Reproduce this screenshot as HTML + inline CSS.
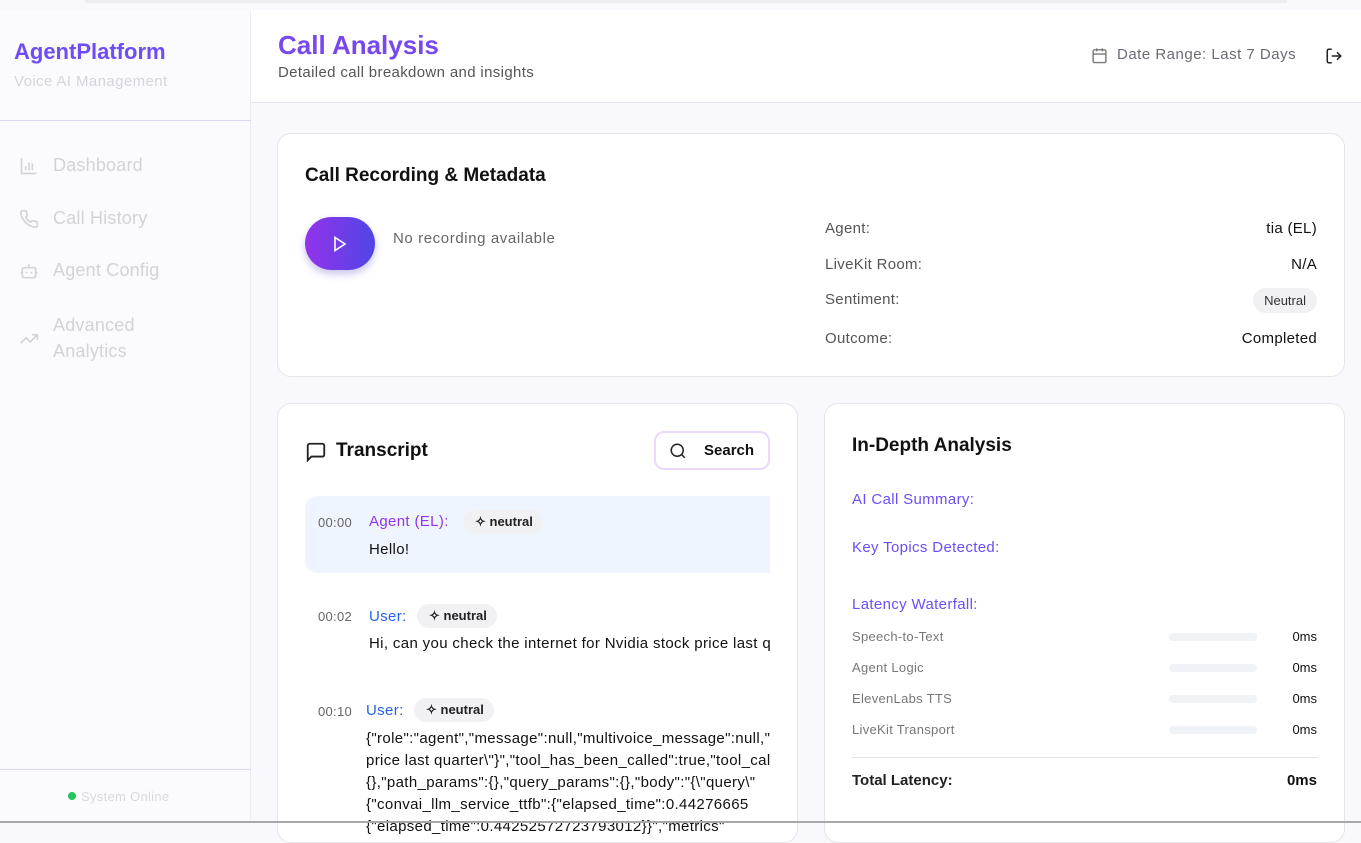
<!DOCTYPE html>
<html><head><meta charset="utf-8"><style>
*{box-sizing:border-box;margin:0;padding:0}
body{width:1361px;height:823px;overflow:hidden;background:#f9f9fd;font-family:"Liberation Sans",sans-serif;position:relative;color:#111}
.a{position:absolute;white-space:nowrap}
.side{position:absolute;left:0;top:10px;width:251px;height:813px;background:#fafaff;border-right:1px solid #ececf2}
.nav{color:#d2d2da;font-size:18px;letter-spacing:.2px}
.nav svg{position:absolute;left:-34px;top:1px}
.card{position:absolute;background:#fff;border:1px solid #e4e4ea;border-radius:14px;overflow:hidden}
.lbl{color:#555;font-size:15px;letter-spacing:.3px}
.val{font-size:15px;color:#111;text-align:right;letter-spacing:.3px}
.pill{background:#f1f1f4;border-radius:14px;font-size:13px;font-weight:bold;padding:4px 10px 4px 12px;color:#222}
.row{color:#777;font-size:13px;letter-spacing:.3px}
.bar{position:absolute;left:344px;width:88px;height:8px;border-radius:4px;background:#eff2f7}
.t{letter-spacing:.35px}
</style></head><body>
<div class="a" style="left:85px;top:0;width:1202px;height:3px;background:#ededf0;border-radius:2px"></div>
<div class="side">
 <div class="a" style="left:14px;top:29px;font-size:22px;font-weight:bold;color:#6f4cf5">AgentPlatform</div>
 <div class="a" style="left:14px;top:63px;font-size:15px;color:#d4d4de;letter-spacing:.4px">Voice AI Management</div>
 <div class="a" style="left:0;top:110px;width:251px;height:1px;background:#ddd8f5"></div>
 <div class="a nav" style="left:53px;top:145px"><svg width="20" height="20" viewBox="0 0 24 24" fill="none" stroke="#d2d2da" stroke-width="2"><path d="M3 3v18h18M8 17v-5M12 17V8M16 17v-8"/></svg>Dashboard</div>
 <div class="a nav" style="left:53px;top:198px"><svg width="20" height="20" viewBox="0 0 24 24" fill="none" stroke="#d2d2da" stroke-width="2"><path d="M22 16.9v3a2 2 0 0 1-2.2 2 19.8 19.8 0 0 1-8.6-3.1 19.5 19.5 0 0 1-6-6A19.8 19.8 0 0 1 2.1 4.2 2 2 0 0 1 4.1 2h3a2 2 0 0 1 2 1.7c.1 1 .4 1.9.7 2.8a2 2 0 0 1-.5 2.1L8 9.9a16 16 0 0 0 6 6l1.3-1.3a2 2 0 0 1 2.1-.4c.9.3 1.8.6 2.8.7a2 2 0 0 1 1.7 2z"/></svg>Call History</div>
 <div class="a nav" style="left:53px;top:250px"><svg width="20" height="20" viewBox="0 0 24 24" fill="none" stroke="#d2d2da" stroke-width="2"><rect x="4" y="8" width="16" height="12" rx="2"/><path d="M12 8V4M2 14h2M20 14h2M9 13v2M15 13v2"/></svg>Agent Config</div>
 <div class="a nav" style="left:53px;top:302px;line-height:26px;white-space:normal;width:120px"><svg width="20" height="20" viewBox="0 0 24 24" fill="none" stroke="#d2d2da" stroke-width="2" style="top:17px"><path d="M22 7l-8.5 8.5-5-5L2 17M16 7h6v6"/></svg>Advanced Analytics</div>
 <div class="a" style="left:0;top:759px;width:251px;height:1px;background:#ddd8f5"></div>
 <div class="a" style="left:68px;top:779px;font-size:13px;color:#d8d8e0;letter-spacing:.3px"><span style="display:inline-block;width:8px;height:8px;border-radius:50%;background:#22c55e;margin-right:5px;vertical-align:1px"></span>System Online</div>
</div>
<div class="a" style="left:251px;top:10px;width:1110px;height:93px;background:#fff;border-bottom:1px solid #e6e6ea"></div>
<div class="a" style="left:278px;top:30px;font-size:26px;font-weight:bold;color:#7648ee">Call Analysis</div>
<div class="a t" style="left:278px;top:64px;font-size:15px;color:#555">Detailed call breakdown and insights</div>
<svg class="a" style="left:1091px;top:47px" width="17" height="17" viewBox="0 0 24 24" fill="none" stroke="#777" stroke-width="2"><rect x="3" y="4" width="18" height="18" rx="2"/><path d="M16 2v4M8 2v4M3 10h18"/></svg>
<div class="a" style="left:1117px;top:46px;font-size:15px;color:#6b6b75;letter-spacing:.5px">Date Range: Last 7 Days</div>
<svg class="a" style="left:1325px;top:47px" width="18" height="18" viewBox="0 0 24 24" fill="none" stroke="#222" stroke-width="2"><path d="M9 21H5a2 2 0 0 1-2-2V5a2 2 0 0 1 2-2h4M16 17l5-5-5-5M21 12H9"/></svg>

<div class="card" style="left:277px;top:133px;width:1068px;height:244px">
 <div class="a" style="left:27px;top:31px;font-size:19px;font-weight:bold;color:#111">Call Recording &amp; Metadata</div>
 <div class="a" style="left:27px;top:83px;width:70px;height:53px;border-radius:27px;background:linear-gradient(90deg,#9333ea,#4f46e5);box-shadow:0 4px 8px rgba(80,60,200,.3)"><svg style="position:absolute;left:28px;top:19px" width="14" height="16" viewBox="0 0 14 16" fill="none" stroke="#fff" stroke-width="1.6"><path d="M2 1.5v13l10-6.5z"/></svg></div>
 <div class="a t" style="left:115px;top:96px;font-size:15px;color:#666;letter-spacing:.6px">No recording available</div>
 <div class="a lbl" style="left:547px;top:86px">Agent:</div><div class="a val" style="right:27px;top:86px">tia (EL)</div>
 <div class="a lbl" style="left:547px;top:122px">LiveKit Room:</div><div class="a val" style="right:27px;top:122px">N/A</div>
 <div class="a lbl" style="left:547px;top:157px">Sentiment:</div><div class="a" style="right:27px;top:154px;background:#f1f1f4;border-radius:13px;font-size:13px;padding:5px 11px;color:#333">Neutral</div>
 <div class="a lbl" style="left:547px;top:196px">Outcome:</div><div class="a val" style="right:27px;top:196px">Completed</div>
</div>

<div class="card" style="left:277px;top:403px;width:521px;height:440px">
 <svg class="a" style="left:27px;top:37px" width="22" height="22" viewBox="0 0 24 24" fill="none" stroke="#222" stroke-width="2"><path d="M21 15a2 2 0 0 1-2 2H7l-4 4V5a2 2 0 0 1 2-2h14a2 2 0 0 1 2 2z"/></svg>
 <div class="a" style="left:58px;top:36px;font-size:19px;font-weight:bold">Transcript</div>
 <div class="a" style="left:376px;top:27px;width:116px;height:39px;border:2px solid #ead8fd;border-radius:10px;font-size:15px;font-weight:bold;padding:9px 0 0 48px">Search<svg style="position:absolute;left:13px;top:9px" width="18" height="18" viewBox="0 0 24 24" fill="none" stroke="#222" stroke-width="2"><circle cx="11" cy="11" r="8"/><path d="M21 21l-4.3-4.3"/></svg></div>
 <div class="a" style="left:27px;top:92px;width:465px;height:77px;background:#eff5ff;border-radius:12px 0 0 12px"></div>
 <div style="position:absolute;left:0;top:0;width:492px;height:440px;overflow:hidden">
  <div class="a" style="left:40px;top:111px;font-size:13px;color:#666;letter-spacing:.3px">00:00</div>
  <div class="a t" style="left:91px;top:109px;font-size:15px;color:#9333ea">Agent (EL):</div>
  <div class="a pill" style="left:185px;top:106px">✧ neutral</div>
  <div class="a t" style="left:91px;top:137px;font-size:15px">Hello!</div>
  <div class="a" style="left:40px;top:205px;font-size:13px;color:#666;letter-spacing:.3px">00:02</div>
  <div class="a t" style="left:91px;top:204px;font-size:15px;color:#2563eb">User:</div>
  <div class="a pill" style="left:139px;top:200px">✧ neutral</div>
  <div class="a t" style="left:91px;top:231px;font-size:15px">Hi, can you check the internet for Nvidia stock price last quarter?</div>
  <div class="a" style="left:40px;top:300px;font-size:13px;color:#666;letter-spacing:.3px">00:10</div>
  <div class="a t" style="left:88px;top:298px;font-size:15px;color:#2563eb">User:</div>
  <div class="a pill" style="left:136px;top:294px">✧ neutral</div>
  <div class="a t" style="left:88px;top:324px;font-size:15px;line-height:22px">{"role":"agent","message":null,"multivoice_message":null,"tool_calls"<br>price last quarter\"}","tool_has_been_called":true,"tool_calls_info"<br>{},"path_params":{},"query_params":{},"body":"{\"query\"<br>{"convai_llm_service_ttfb":{"elapsed_time":0.44276665<br>{"elapsed_time":0.44252572723793012}}","metrics"</div>
 </div>
</div>

<div class="card" style="left:824px;top:403px;width:521px;height:440px">
 <div class="a" style="left:27px;top:31px;font-size:19px;font-weight:bold">In-Depth Analysis</div>
 <div class="a t" style="left:27px;top:87px;font-size:15px;color:#6f4cf5">AI Call Summary:</div>
 <div class="a t" style="left:27px;top:135px;font-size:15px;color:#6f4cf5">Key Topics Detected:</div>
 <div class="a t" style="left:27px;top:192px;font-size:15px;color:#6f4cf5">Latency Waterfall:</div>
 <div class="a row" style="left:27px;top:225px">Speech-to-Text</div><div class="bar" style="top:229px"></div><div class="a" style="right:27px;top:225px;font-size:13px">0ms</div>
 <div class="a row" style="left:27px;top:256px">Agent Logic</div><div class="bar" style="top:260px"></div><div class="a" style="right:27px;top:256px;font-size:13px">0ms</div>
 <div class="a row" style="left:27px;top:287px">ElevenLabs TTS</div><div class="bar" style="top:291px"></div><div class="a" style="right:27px;top:287px;font-size:13px">0ms</div>
 <div class="a row" style="left:27px;top:318px">LiveKit Transport</div><div class="bar" style="top:322px"></div><div class="a" style="right:27px;top:318px;font-size:13px">0ms</div>
 <div class="a" style="left:27px;top:353px;width:466px;height:1px;background:#e4e4e8"></div>
 <div class="a" style="left:27px;top:368px;font-size:15px;font-weight:bold;color:#222">Total Latency:</div>
 <div class="a" style="right:27px;top:368px;font-size:15px;font-weight:bold">0ms</div>
</div>
<div class="a" style="left:0;top:821px;width:1361px;height:2px;background:#a8a8ac"></div>
</body></html>
